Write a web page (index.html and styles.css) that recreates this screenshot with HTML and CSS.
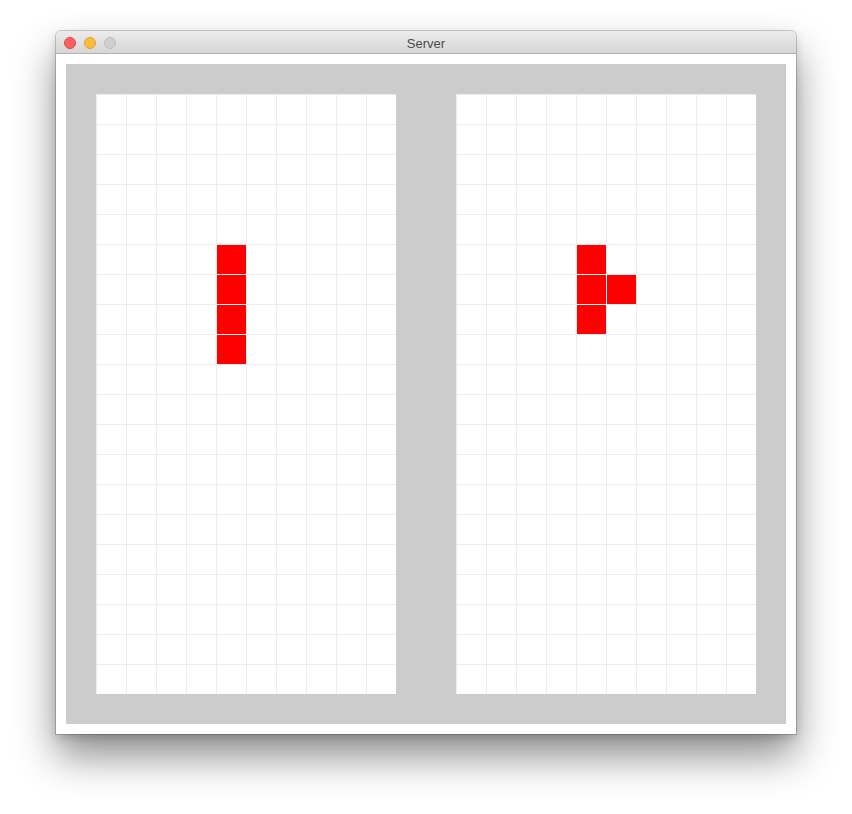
FILE: index.html
```html
<!DOCTYPE html>
<html>
<head>
<meta charset="utf-8">
<title>Server</title>
<link rel="stylesheet" href="styles.css">
</head>
<body>
<div class="window">
  <div class="titlebar">
    <div class="lights">
      <span class="light close"></span>
      <span class="light min"></span>
      <span class="light zoom"></span>
    </div>
    <div class="title">Server</div>
  </div>
  <div class="content">
    <div class="stage">
      <div class="board">
        <div class="cell c4 r5"></div>
        <div class="cell c4 r6 jt"></div>
        <div class="cell c4 r7 jt"></div>
        <div class="cell c4 r8 jt"></div>
      </div>
      <div class="board">
        <div class="cell c4 r5"></div>
        <div class="cell c4 r6 jt"></div>
        <div class="cell c5 r6 jl"></div>
        <div class="cell c4 r7 jt"></div>
      </div>
    </div>
  </div>
</div>
</body>
</html>
```
FILE: styles.css
```css
html, body {
  margin: 0;
  padding: 0;
  background: #ffffff;
}
html {
  height: 100%;
}
body {
  box-sizing: border-box;
  min-height: 814px;
  padding: 31px 0 0 56px;
  font-family: "Liberation Sans", Arial, sans-serif;
}
.window {
  width: 740px;
  border-radius: 5px 5px 0 0;
  box-shadow: 0 0 0 1px rgba(0,0,0,0.18), 0 22px 40px rgba(0,0,0,0.45), 0 4px 10px rgba(0,0,0,0.15);
  background: #fff;
  overflow: hidden;
}
.titlebar {
  height: 22px;
  border-bottom: 1px solid #b2b2b2;
  background: linear-gradient(#ececec, #d6d6d6);
  display: flex;
  align-items: center;
  justify-content: center;
  position: relative;
}
.lights {
  position: absolute;
  left: 8px;
  top: 6px;
  display: flex;
  gap: 8px;
}
.light {
  width: 12px;
  height: 12px;
  box-sizing: border-box;
  border-radius: 50%;
  display: block;
}
.close { background: #fc605c; border: 1px solid #de4a46; }
.min { background: #fdbc40; border: 1px solid #dea034; }
.zoom { background: #cfcfcf; border: 1px solid #bcbcbc; }
.title {
  font-size: 13px;
  color: #4a4a4a;
  line-height: 22px;
  padding-top: 3px;
}
.content {
  padding: 10px;
  background: #fff;
}
.stage {
  background: #cccccc;
  padding: 30px;
  display: flex;
  gap: 60px;
}
.board {
  width: 300px;
  height: 600px;
  background-color: #fff;
  background-image:
    linear-gradient(to right, #ececec 1px, transparent 1px),
    linear-gradient(to bottom, #ececec 1px, transparent 1px);
  background-size: 30px 30px;
  display: grid;
  grid-template-columns: repeat(10, 30px);
  grid-template-rows: repeat(20, 30px);
}
.cell {
  box-sizing: border-box;
  background: #ff0000;
  border-left: 1px solid #ececec;
  border-top: 1px solid #ececec;
}
.cell.jt { border-top-color: #fff; }
.cell.jl { border-left-color: #fff; }
.c4 { grid-column: 5; }
.c5 { grid-column: 6; }
.r5 { grid-row: 6; }
.r6 { grid-row: 7; }
.r7 { grid-row: 8; }
.r8 { grid-row: 9; }
```
